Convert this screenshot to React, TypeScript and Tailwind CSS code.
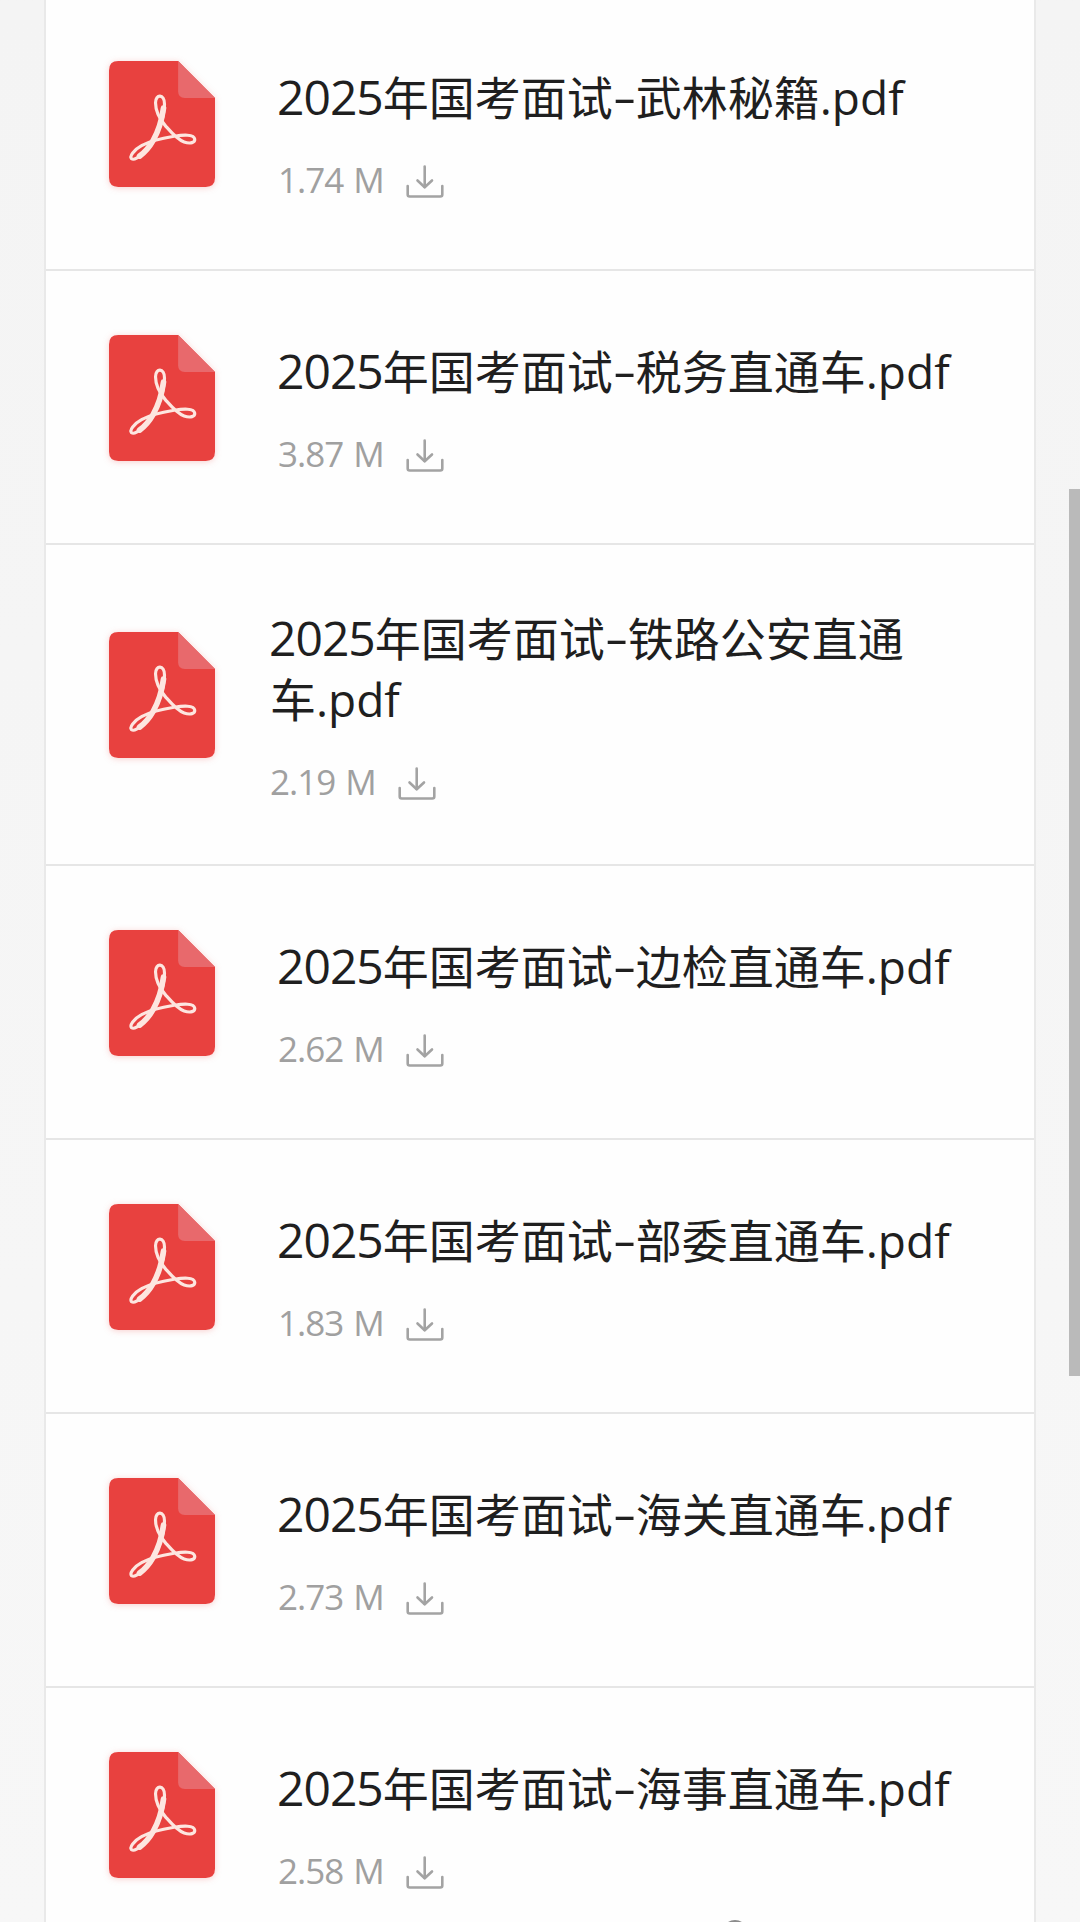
interface PdfFile {
  name: string;
  tail?: string;
  size: string;
}

const files: PdfFile[] = [
  { name: '武林秘籍', size: '1.74 M' },
  { name: '税务直通车', size: '3.87 M' },
  { name: '铁路公安直通', tail: '车', size: '2.19 M' },
  { name: '边检直通车', size: '2.62 M' },
  { name: '部委直通车', size: '1.83 M' },
  { name: '海关直通车', size: '2.73 M' },
  { name: '海事直通车', size: '2.58 M' }
];

function PdfIcon() {
  return (
    <svg
      viewBox="0 0 319 375"
      preserveAspectRatio="none"
      className="w-[106px] h-[126px] shrink-0 drop-shadow-[0_1px_3px_rgba(233,66,63,0.25)]"
    >
      <path
        d="M28 0H208L319 110V347Q319 375 291 375H28Q0 375 0 347V28Q0 0 28 0Z"
        fill="#e8413f"
      />
      <path d="M208 0L319 110H228Q208 110 208 90Z" fill="#e8696c" />
      <g fill="none" stroke="#fde6e0" strokeLinecap="round" strokeLinejoin="round">
        <path
          d="M134 236C152 206 167 160 167 128C167 97 140 98 140 124C140 148 152 172 170 193C186 211 204 233 226 241C246 248 259 242 258 233C256 217 222 220 196 224C164 229 126 236 98 252C74 265 61 284 68 291C80 299 113 270 134 236Z"
          strokeWidth="9.5"
        />
        <path
          d="M164 140C160 168 149 208 133 236C121 257 107 272 92 283"
          strokeWidth="17"
        />
      </g>
    </svg>
  );
}

function DownloadIcon() {
  return (
    <svg
      viewBox="0 0 38 33"
      className="w-[38px] h-[33px] mt-[3px]"
      fill="none"
      stroke="#a3a3a3"
      strokeWidth="2.6"
      strokeLinecap="round"
      strokeLinejoin="round"
    >
      <path d="M18.7 1.5V22" />
      <path d="M11.5 15.5L18.7 22.3L26 15.5" />
      <path d="M1.7 21V29.5Q1.7 31.5 3.7 31.5H34.3Q36.3 31.5 36.3 29.5V21" />
    </svg>
  );
}

function FileRow({ file }: { file: PdfFile }) {
  const wrapped = Boolean(file.tail);

  return (
    <li
      className={`flex items-center border-b-2 border-[#e6e6e6] pl-[63px] pb-[19px] ${
        wrapped ? 'h-[321px]' : 'h-[274px]'
      }`}
    >
      <PdfIcon />
      <div className={`pt-[26px] ${wrapped ? 'ml-[55px]' : 'ml-[63px]'}`}>
        <h3 className="text-[46px] leading-[61px] text-[#1f1f1f] whitespace-nowrap">
          <span className="-ml-px text-[48px] leading-none tracking-[-1px]">2025</span>
          年国考面试
          <span className="inline-block w-[23px] text-center leading-none scale-x-[1.6] -translate-y-px">
            -
          </span>
          {file.name}
          {wrapped && <br />}
          {file.tail}
          .pdf
        </h3>
        <div className="mt-[26px] flex items-center h-[52px]">
          <span className="text-[35px] tracking-[-1px] [word-spacing:2px] text-[#a0a0a0] w-[128px] whitespace-nowrap">
            {file.size}
          </span>
          <DownloadIcon />
        </div>
      </div>
    </li>
  );
}

export default function App() {
  return (
    <div className="relative w-[1080px] h-[1922px] overflow-hidden bg-linear-to-b from-[#f4f4f4] to-[#f7f7f7] font-['Open_Sans','Noto_Sans_CJK_SC',sans-serif]">
      <ul className="-mt-[3px] ml-[44px] w-[992px] bg-[#fefefe] border-x-2 border-[#e9e9e9]">
        {files.map((file) => (
          <FileRow key={file.name} file={file} />
        ))}
      </ul>

      {/* Scrollbar thumb */}
      <div className="absolute right-0 top-[489px] w-[11px] h-[887px] bg-[#bababa]" />

      {/* Top edge of the floating button below the fold */}
      <div className="absolute left-[722px] top-[1920px] size-[26px] rounded-full border-2 border-[#8c8c8c]" />
    </div>
  );
}
